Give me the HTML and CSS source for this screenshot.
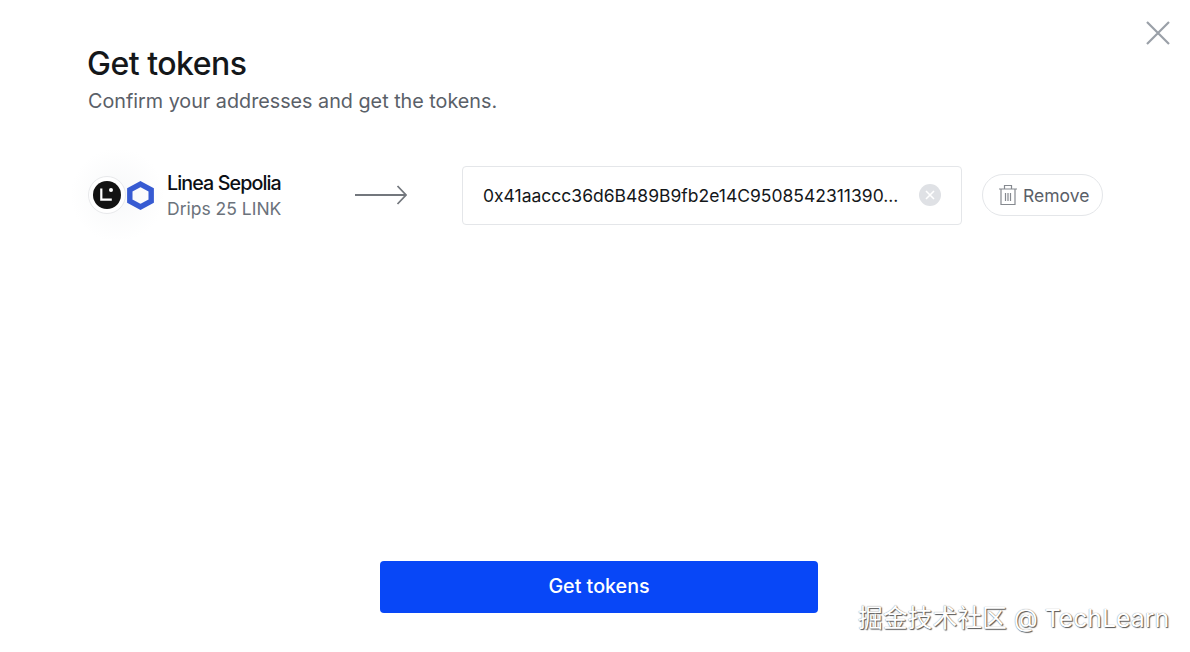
FILE: index.html
```html
<!DOCTYPE html>
<html lang="en">
<head>
  <meta charset="UTF-8">
  <meta name="viewport" content="width=device-width, initial-scale=1.0">
  <title>Get tokens</title>
  <link rel="stylesheet" href="styles.css">
</head>
<body>

  <div class="modal">
    <button class="close-btn" aria-label="Close">
      <svg width="26" height="26" viewBox="0 0 26 26"><path d="M2 2 L24 24 M24 2 L2 24" fill="none" stroke="#9aa0a8" stroke-width="2.2"/></svg>
    </button>

    <h1>Get tokens</h1>
    <p class="subtitle">Confirm your addresses and get the tokens.</p>

    <div class="faucet-row">
      <div class="chain">
        <div class="chain-icons">
          <span class="chain-ring">
            <svg width="28" height="28" viewBox="0 0 28 28">
              <circle cx="14" cy="14" r="14" fill="#121212"/>
              <path d="M8.3 7.5 V18.7 H18.8" fill="none" stroke="#fff" stroke-width="2.2"/>
              <circle cx="18" cy="9" r="2" fill="#fff"/>
            </svg>
          </span>
          <svg class="link-icon" width="27" height="29" viewBox="0 0 27 29">
            <path d="M13.5 3.1 L24.2 8.8 V20.2 L13.5 25.9 L2.8 20.2 V8.8 Z" fill="none" stroke="#375bd2" stroke-width="5.4"/>
          </svg>
        </div>
        <div class="chain-text">
          <div class="chain-name">Linea Sepolia</div>
          <div class="chain-drips">Drips 25 LINK</div>
        </div>
      </div>

      <svg class="arrow" width="52" height="20" viewBox="0 0 52 20">
        <path d="M0 10 H51 M42.5 1 L51 10 L42.5 19" fill="none" stroke="#73777d" stroke-width="1.8"/>
      </svg>

      <div class="address-box">
        <span class="address">0x41aaccc36d6B489B9fb2e14C9508542311390...</span>
        <span class="clear-btn">
          <svg width="10" height="10" viewBox="0 0 10 10"><path d="M1 1 L9 9 M9 1 L1 9" fill="none" stroke="#fff" stroke-width="1.6"/></svg>
        </span>
      </div>

      <button class="remove-btn">
        <svg width="20" height="22" viewBox="0 0 20 22">
          <path d="M1 5 H19 M6.5 5 V1.5 H13.5 V5 M3 5 V20.5 H17 V5 M7.5 9 V17 M10 9 V17 M12.5 9 V17" fill="none" stroke="#85898f" stroke-width="1.2"/>
        </svg>
        Remove
      </button>
    </div>

    <div class="footer">
      <button class="submit-btn">Get tokens</button>
    </div>
  </div>

  <div class="watermark">掘金技术社区 @ TechLearn</div>

</body>
</html>
```

FILE: styles.css
```css
body {
  font-family: Inter, "Noto Sans CJK SC", sans-serif;
  background-color: #fff;
  margin: 0;
  padding: 0;
  height: 652px;
  overflow: hidden;
}

button {
  font-family: inherit;
  cursor: pointer;
}

.modal {
  display: flex;
  flex-direction: column;
  height: 652px;
  box-sizing: border-box;
  padding: 45px 80px 39px 88px;
}

.close-btn {
  position: absolute;
  top: 20px;
  left: 1145px;
  width: 26px;
  height: 26px;
  padding: 0;
  border: none;
  background: none;
}

h1 {
  margin: 0 0 0 -1px;
  font-size: 32px;
  line-height: 38px;
  font-weight: 500;
  letter-spacing: -0.5px;
  color: #14171a;
}

.subtitle {
  margin: 6px 0 0;
  font-size: 19.75px;
  line-height: 24px;
  color: #5a6068;
}

.faucet-row {
  display: flex;
  align-items: center;
  margin-top: 52px;
}

.chain {
  display: flex;
  align-items: center;
  width: 267px;
}

.chain-icons {
  display: flex;
  align-items: center;
  flex: none;
  width: 99px;
  height: 90px;
  margin: -15px 0 -15px -20px;
  padding-left: 20px;
  box-sizing: border-box;
  background: radial-gradient(circle at 50% 50%, #f7f8f9 0%, #fff 70%);
}

.chain-ring {
  display: flex;
  align-items: center;
  justify-content: center;
  width: 38px;
  height: 38px;
  flex: none;
  box-sizing: border-box;
  border: 1px solid #e8e9eb;
  border-radius: 50%;
  background: #fff;
}

.link-icon {
  flex: none;
  margin-left: 1px;
}

.chain-text {
  padding-top: 2px;
}

.chain-name {
  font-size: 19.7px;
  line-height: 26px;
  font-weight: 500;
  letter-spacing: -0.9px;
  color: #0c0f14;
}

.chain-drips {
  font-size: 17.5px;
  line-height: 26px;
  color: #6b727b;
}

.arrow {
  flex: none;
}

.address-box {
  display: flex;
  align-items: center;
  justify-content: space-between;
  width: 500px;
  height: 59px;
  box-sizing: border-box;
  margin-left: 55px;
  padding: 0 20px 0 20px;
  border: 1px solid #e4e6e9;
  border-radius: 4px;
}

.address {
  font-size: 17.5px;
  color: #14171a;
  white-space: nowrap;
}

.clear-btn {
  display: flex;
  align-items: center;
  justify-content: center;
  width: 22px;
  height: 22px;
  border-radius: 50%;
  background: #dfe1e5;
}

.remove-btn {
  display: flex;
  align-items: center;
  gap: 5px;
  width: 121px;
  height: 42px;
  margin-left: 20px;
  padding: 0 0 0 15px;
  border: 1px solid #e4e6e9;
  border-radius: 21px;
  background: #fff;
  font-size: 17.5px;
  color: #5a6068;
}

.footer {
  display: flex;
  justify-content: center;
  margin-top: auto;
}

.submit-btn {
  width: 438px;
  height: 52px;
  padding: 0 0 2px;
  border: none;
  border-radius: 4px;
  background-color: #0847f7;
  color: #fff;
  font-size: 19.7px;
  font-weight: 500;
}

.watermark {
  position: absolute;
  left: 858px;
  top: 603px;
  font-size: 24.8px;
  line-height: 30px;
  white-space: nowrap;
  color: #fff;
  text-shadow: 1px 1px 1px #555, 0 0 1px #777;
}
```
